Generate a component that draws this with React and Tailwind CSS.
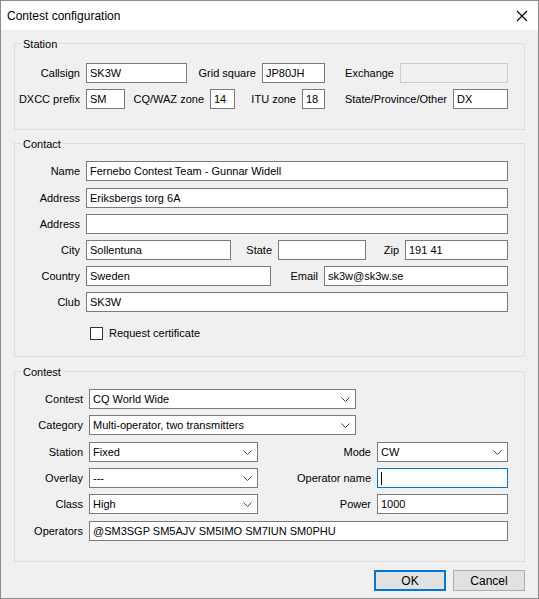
import React from "react";

const Input = ({ w, v = "", disabled, focus }) => (
  <div
    className={`ml-[6px] h-[20px] flex-none flex items-center px-[3px] border ${
      disabled ? "bg-[#f0f0f0] border-[#cccccc]" : focus ? "bg-white border-[#0078d7]" : "bg-white border-[#7a7a7a]"
    }`}
    style={{ width: w }}
  >
    {focus ? <span className="w-px h-[13px] bg-black" /> : <span className="whitespace-nowrap">{v}</span>}
  </div>
);

const Combo = ({ w, v }) => (
  <div className="ml-[6px] h-[20px] flex-none flex items-center justify-between pl-[3px] pr-[5px] bg-white border border-[#7a7a7a]" style={{ width: w }}>
    <span>{v}</span>
    <svg width="9" height="5" viewBox="0 0 9 5"><path d="M0.5 0.5 L4.5 4.5 L8.5 0.5" fill="none" stroke="#444" strokeWidth="1" /></svg>
  </div>
);

const L = ({ w, t }) => (
  <div className="flex-none text-right whitespace-nowrap" style={{ width: w }}>{t}</div>
);

const Group = ({ title, className, children }) => (
  <div className={`relative mx-[13px] border border-[#dcdcdc] ${className}`}>
    <span className="absolute -top-[8px] left-[6px] bg-[#f0f0f0] px-[2px]">{title}</span>
    {children}
  </div>
);

export default function App() {
  return (
    <div className="w-[539px] h-[599px] bg-[#f0f0f0] border border-[#8c8c8c] text-[11px] text-black overflow-hidden" style={{ fontFamily: '"Liberation Sans", Arial, sans-serif' }}>
      <div className="h-[29px] bg-white flex items-center justify-between pl-[6px] pr-[10px]">
        <span className="text-[12px]">Contest configuration</span>
        <svg width="12" height="12" viewBox="0 0 12 12"><path d="M1 1 L11 11 M11 1 L1 11" stroke="#000" strokeWidth="1.1" /></svg>
      </div>
      <Group title="Station" className="mt-[13px] h-[87px] pt-[19px]">
        <div className="flex items-center">
          <L w={65} t="Callsign" /><Input w={101} v="SK3W" />
          <L w={69} t="Grid square" /><Input w={63} v="JP80JH" />
          <L w={69} t="Exchange" /><Input w={108} disabled />
        </div>
        <div className="flex items-center mt-[6px]">
          <L w={65} t="DXCC prefix" /><Input w={39} v="SM" />
          <L w={79} t="CQ/WAZ zone" /><Input w={25} v="14" />
          <L w={61} t="ITU zone" /><Input w={23} v="18" />
          <L w={122} t="State/Province/Other" /><Input w={55} v="DX" />
        </div>
      </Group>
      <Group title="Contact" className="mt-[13px] h-[214px] pt-[17px]">
        <div className="flex items-center"><L w={65} t="Name" /><Input w={422} v="Fernebo Contest Team - Gunnar Widell" /></div>
        <div className="flex items-center mt-[7px]"><L w={65} t="Address" /><Input w={422} v="Eriksbergs torg 6A" /></div>
        <div className="flex items-center mt-[6px]"><L w={65} t="Address" /><Input w={422} /></div>
        <div className="flex items-center mt-[6px]">
          <L w={65} t="City" /><Input w={145} v="Sollentuna" />
          <L w={41} t="State" /><Input w={88} />
          <L w={33} t="Zip" /><Input w={103} v="191 41" />
        </div>
        <div className="flex items-center mt-[6px]">
          <L w={65} t="Country" /><Input w={185} v="Sweden" />
          <L w={47} t="Email" /><Input w={184} v="sk3w@sk3w.se" />
        </div>
        <div className="flex items-center mt-[6px]"><L w={65} t="Club" /><Input w={422} v="SK3W" /></div>
        <div className="flex items-center mt-[13px] ml-[75px]">
          <div className="w-[13px] h-[13px] border border-[#333] bg-white" />
          <span className="ml-[6px]">Request certificate</span>
        </div>
      </Group>
      <Group title="Contest" className="mt-[14px] h-[191px] pt-[17px]">
        <div className="flex items-center"><L w={68} t="Contest" /><Combo w={267} v="CQ World Wide" /></div>
        <div className="flex items-center mt-[6px]"><L w={68} t="Category" /><Combo w={267} v="Multi-operator, two transmitters" /></div>
        <div className="flex items-center mt-[7px]">
          <L w={68} t="Station" /><Combo w={169} v="Fixed" />
          <L w={113} t="Mode" /><Combo w={131} v="CW" />
        </div>
        <div className="flex items-center mt-[6px]">
          <L w={68} t="Overlay" /><Combo w={169} v="---" />
          <L w={113} t="Operator name" /><Input w={131} focus />
        </div>
        <div className="flex items-center mt-[6px]">
          <L w={68} t="Class" /><Combo w={169} v="High" />
          <L w={113} t="Power" /><Input w={131} v="1000" />
        </div>
        <div className="flex items-center mt-[7px]"><L w={68} t="Operators" /><Input w={419} v="@SM3SGP SM5AJV SM5IMO SM7IUN SM0PHU" /></div>
      </Group>
      <div className="flex justify-end gap-[7px] mt-[8px] mr-[13px] text-[12px]">
        <div className="w-[72px] h-[21px] flex items-center justify-center bg-[#e1e1e1] border-2 border-[#0078d7]">OK</div>
        <div className="w-[72px] h-[21px] flex items-center justify-center bg-[#e1e1e1] border border-[#adadad]">Cancel</div>
      </div>
    </div>
  );
}
